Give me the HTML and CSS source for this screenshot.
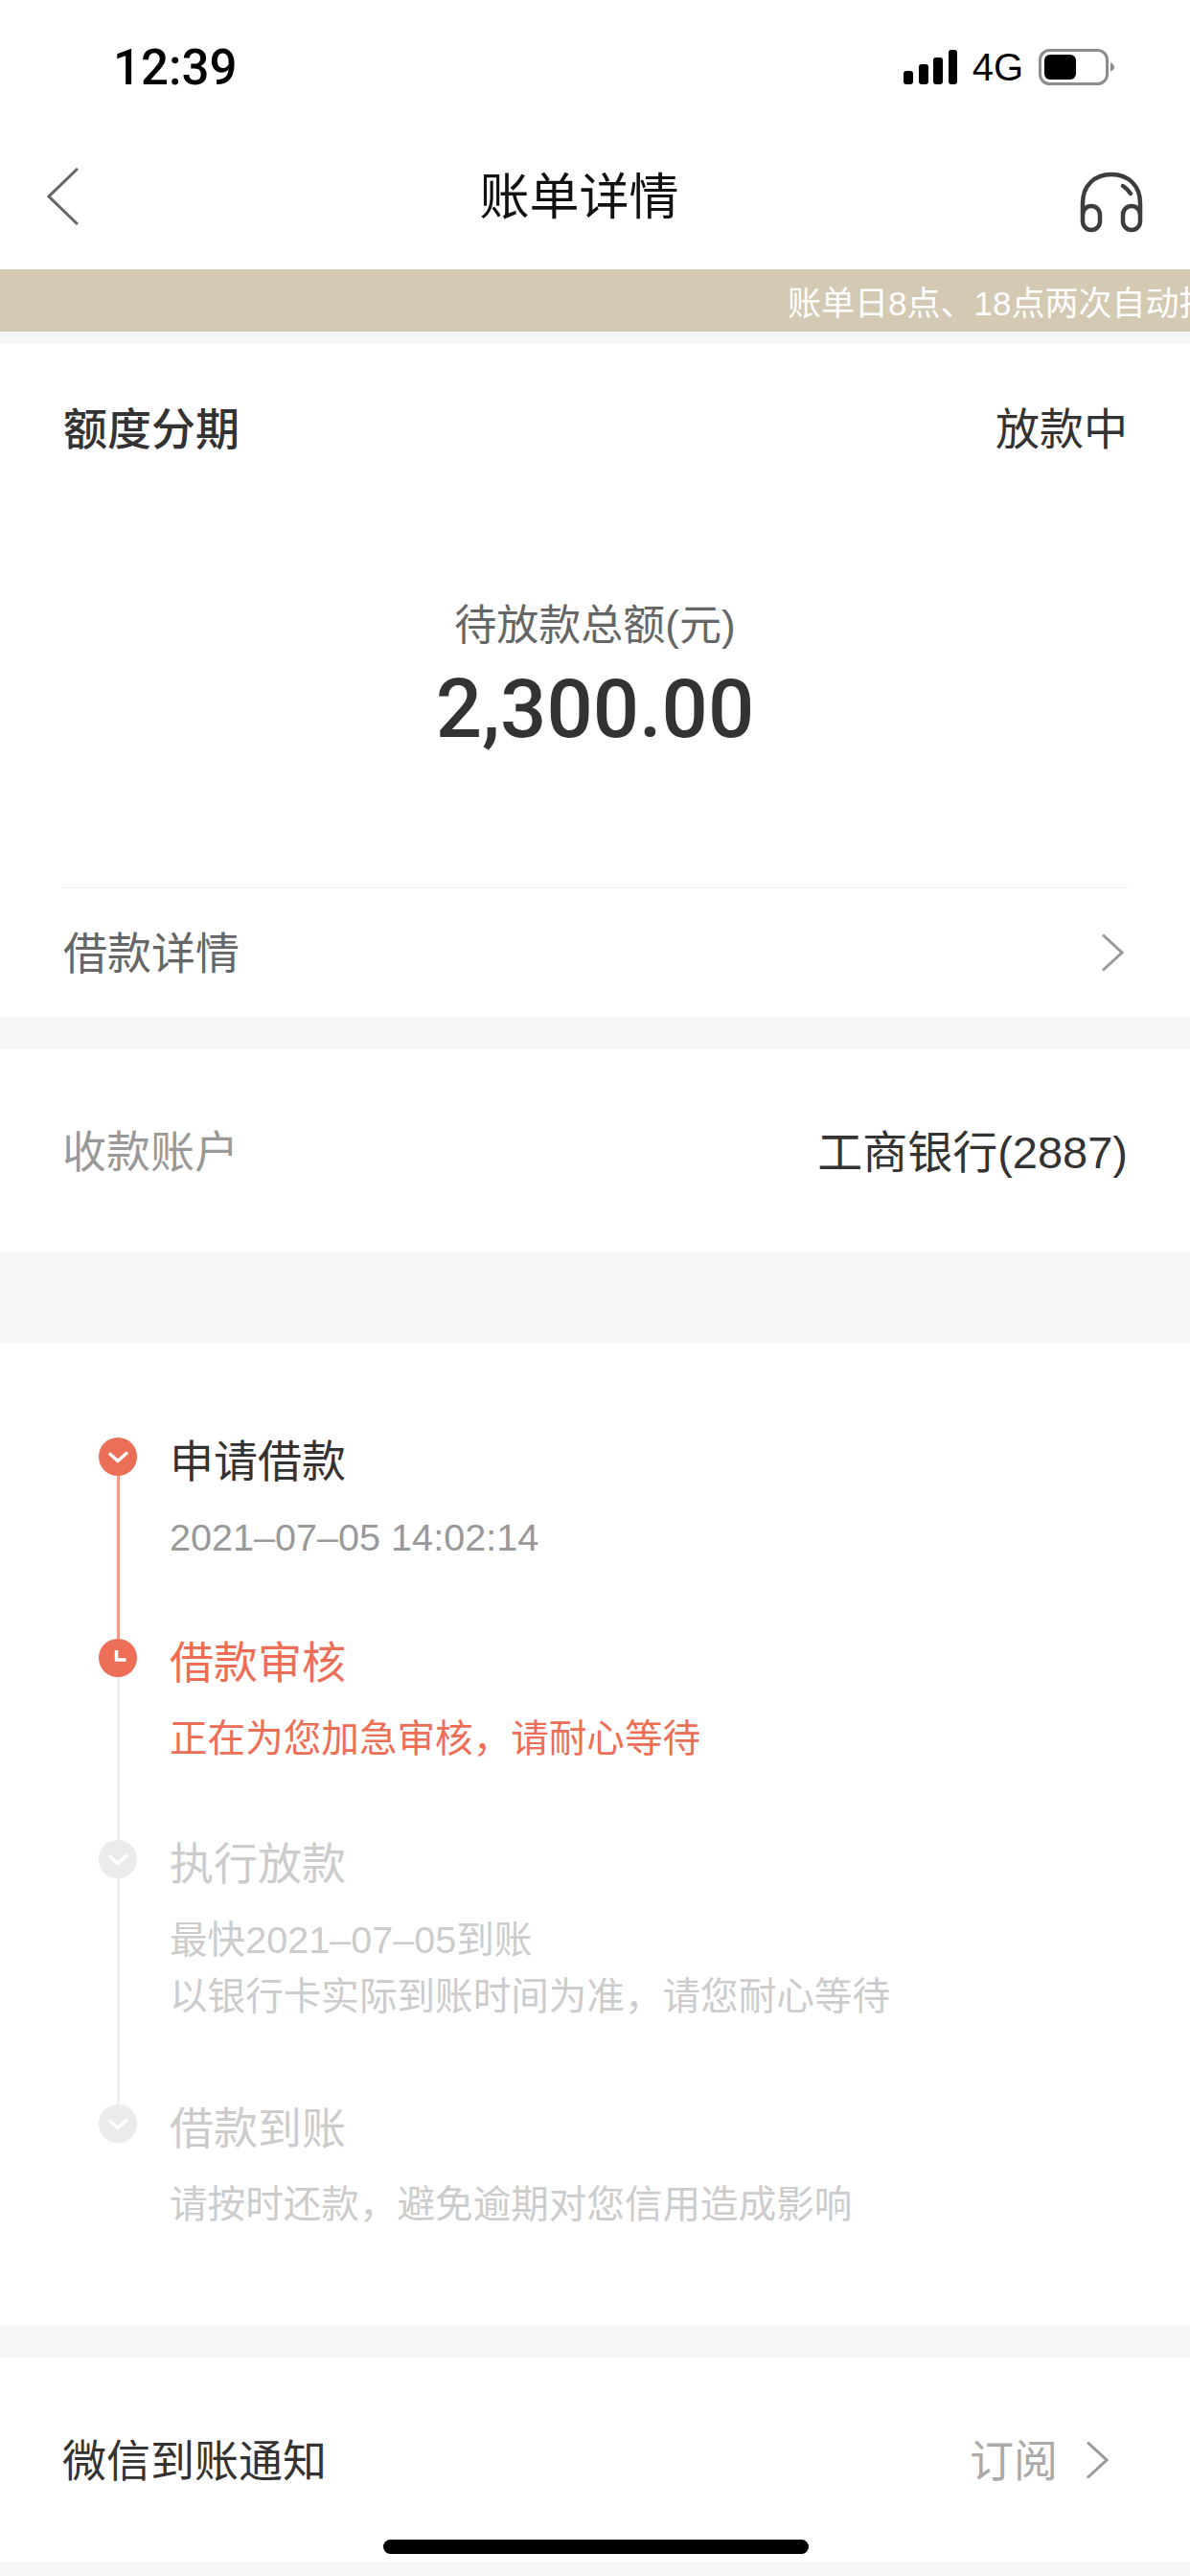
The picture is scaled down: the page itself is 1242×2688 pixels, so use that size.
FILE: index.html
```html
<!DOCTYPE html>
<html lang="zh-CN">
<head>
<meta charset="utf-8">
<title>账单详情</title>
<link rel="stylesheet" href="styles.css">
</head>
<body>
<div class="page">
  <header class="top">
    <div class="status">
      <span class="time">12:39</span>
      <div class="status-icons">
        <svg class="signal" width="56" height="36" viewBox="0 0 56 36"><rect x="0" y="22" width="10" height="14" rx="3"/><rect x="16" y="15" width="10" height="21" rx="3"/><rect x="31" y="8" width="10" height="28" rx="3"/><rect x="47" y="0" width="9" height="36" rx="3"/></svg>
        <span class="net">4G</span>
        <svg class="battery" width="79" height="38" viewBox="0 0 79 38"><rect x="1.500" y="1.500" width="70" height="35" rx="10" fill="none" stroke="#8c8c8c" stroke-width="3"/><rect x="6" y="6" width="33" height="26" rx="6" fill="#000"/><path d="M75 14.500c2.500 1 4 2.500 4 4.500s-1.500 3.500-4 4.500z" fill="#8c8c8c"/></svg>
      </div>
    </div>
    <nav class="nav">
      <svg class="nav-back" width="33" height="60" viewBox="0 0 33 60"><path d="M32 1 2 30l30 29" fill="none" stroke="#666" stroke-width="3"/></svg>
      <h1 class="nav-title">账单详情</h1>
      <svg width="66" height="64" viewBox="0 0 66 64" fill="none" stroke="#3d3d3d" stroke-width="4.500" stroke-linecap="round"><path d="M3 44V33C3 15 15 3 33 3s30 12 30 30v11"/><path d="M45 15c3 2 6 5 8 8"/><rect x="3" y="36" width="18" height="25" rx="9"/><rect x="45" y="36" width="18" height="25" rx="9"/></svg>
    </nav>
  </header>

  <div class="notice"><span class="notice-text">账单日8点、18点两次自动扣</span></div>

  <section class="card card-main">
    <div class="row row-head">
      <span class="product">额度分期</span>
      <span class="state">放款中</span>
    </div>
    <div class="summary">
      <div class="summary-label">待放款总额(元)</div>
      <div class="summary-amount">2,300.00</div>
    </div>
    <div class="row row-link">
      <span class="link-label">借款详情</span>
      <svg class="chev" width="24" height="40" viewBox="0 0 24 40"><path d="M2 1.500 22 20 2 38.500" fill="none" stroke="#999" stroke-width="3"/></svg>
    </div>
  </section>

  <section class="card card-account">
    <div class="row row-account">
      <span class="muted">收款账户</span>
      <span class="value">工商银行(2887)</span>
    </div>
  </section>

  <section class="card card-steps">
    <ol class="steps">
      <li class="step step-done">
        <div class="rail">
          <svg class="dot" width="40" height="40" viewBox="0 0 40 40"><circle cx="20" cy="20" r="20" fill="#ec6e56"/><path d="M11 16.500l9 8 10-9" fill="none" stroke="#fff" stroke-width="3.500"/></svg>
          <span class="line"></span>
        </div>
        <div class="step-body">
          <div class="step-title">申请借款</div>
          <p class="step-note">2021–07–05 14:02:14</p>
        </div>
      </li>
      <li class="step step-active">
        <div class="rail">
          <svg class="dot" width="40" height="40" viewBox="0 0 40 40"><circle cx="20" cy="20" r="20" fill="#ec6e56"/><path d="M18.500 12v10h10" fill="none" stroke="#fff" stroke-width="3.500"/></svg>
          <span class="line"></span>
        </div>
        <div class="step-body">
          <div class="step-title">借款审核</div>
          <p class="step-note">正在为您加急审核，请耐心等待</p>
        </div>
      </li>
      <li class="step step-todo step-tall">
        <div class="rail">
          <svg class="dot" width="40" height="40" viewBox="0 0 40 40"><circle cx="20" cy="20" r="20" fill="#ebebeb"/><path d="M11 16.500l9 8 10-9" fill="none" stroke="#fff" stroke-width="3.500"/></svg>
          <span class="line"></span>
        </div>
        <div class="step-body">
          <div class="step-title">执行放款</div>
          <p class="step-note">最快2021–07–05到账<br>以银行卡实际到账时间为准，请您耐心等待</p>
        </div>
      </li>
      <li class="step step-todo">
        <div class="rail">
          <svg class="dot" width="40" height="40" viewBox="0 0 40 40"><circle cx="20" cy="20" r="20" fill="#ebebeb"/><path d="M11 16.500l9 8 10-9" fill="none" stroke="#fff" stroke-width="3.500"/></svg>
        </div>
        <div class="step-body">
          <div class="step-title">借款到账</div>
          <p class="step-note">请按时还款，避免逾期对您信用造成影响</p>
        </div>
      </li>
    </ol>
  </section>

  <section class="card card-notify">
    <div class="row row-notify">
      <span class="notify-label">微信到账通知</span>
      <span class="notify-action">
        <span class="notify-sub">订阅</span>
        <svg width="24" height="40" viewBox="0 0 24 40"><path d="M2 1.500 22 20 2 38.500" fill="none" stroke="#999" stroke-width="3"/></svg>
      </span>
    </div>
  </section>

  <div class="home-bar"></div>
</div>
</body>
</html>
```

FILE: styles.css
```css
* { box-sizing: border-box; }
html, body { margin: 0; padding: 0; }
body {
  background: #f5f6f8;
  font-family: "Liberation Sans", "Noto Sans CJK SC", sans-serif;
  color: #333;
}
.page {
  position: relative;
  width: 1242px;
  height: 2688px;
  overflow: hidden;
}
.top { background: #fff; height: 281px; }
.status {
  height: 140px;
  padding: 0 79px 0 118px;
  display: flex;
  align-items: center;
  justify-content: space-between;
}
.time {
  font-family: Roboto, "Liberation Sans", sans-serif;
  font-weight: 500;
  font-size: 51px;
  color: #000;
}
.status-icons { display: flex; align-items: center; }
.signal { fill: #000; margin-right: 16px; }
.net {
  font-size: 40px;
  color: #000;
  margin-right: 16px;
}
.nav {
  height: 141px;
  padding: 0 49px;
  display: flex;
  align-items: center;
  justify-content: space-between;
}
.nav-back { margin-bottom: 12px; }
.nav-title {
  margin: 0 0 18px;
  font-size: 52px;
  font-weight: 400;
  color: #111;
}
.notice {
  height: 65px;
  background: #d4c9b3;
  padding-left: 822px;
  display: flex;
  align-items: center;
  overflow: hidden;
  white-space: nowrap;
}
.notice-text { font-size: 35px; color: #fff; flex: none; }
.card { background: #fff; }
.card-main { margin-top: 13px; height: 702px; }
.card-account { margin-top: 34px; height: 212px; }
.card-steps { margin-top: 94px; height: 1026px; padding: 99px 0 0 103px; }
.card-notify { margin-top: 33px; height: 213px; }
.row {
  display: flex;
  align-items: center;
  justify-content: space-between;
  margin: 0 65px;
}
.row-head { height: 178px; padding-bottom: 8px; }
.product { font-weight: 500; color: #333; font-size: 46px; margin-left: 1px; }
.state { color: #333; font-size: 46px; }
.summary { text-align: center; padding-top: 87px; height: 389px; }
.summary-label { font-size: 44px; line-height: 58px; color: #666; }
.summary-amount {
  font-family: Roboto, "Liberation Sans", sans-serif;
  font-weight: 500;
  font-size: 85px;
  line-height: 100px;
  margin-top: 8px;
  color: #333;
}
.row-link {
  height: 135px;
  border-top: 1px solid #eeeeee;
  padding-right: 4px;
}
.link-label { font-size: 46px; color: #666; margin: 0 0 6px 1px; }
.row-account { height: 212px; padding-bottom: 6px; }
.muted { color: #999; font-size: 46px; }
.value { color: #333; font-size: 47px; }
.steps { list-style: none; margin: 0; padding: 0; }
.step { display: flex; height: 210px; }
.step-tall { height: 276px; }
.rail {
  width: 40px;
  margin-right: 34px;
  display: flex;
  flex-direction: column;
  align-items: center;
}
.dot { display: block; flex: none; }
.line { flex: 1; width: 3px; background: #eee; }
.step-done .line { background: #f29c8c; }
.step-title { font-size: 46px; line-height: 40px; padding-top: 5px; color: #333; }
.step-note {
  margin: 30px 0 0;
  font-size: 39.6px;
  line-height: 59px;
  color: #999;
}
.step-active .step-title, .step-active .step-note { color: #ec6e56; }
.step-todo .step-title, .step-todo .step-note { color: #ccc; }
.row-notify { height: 213px; margin-right: 85px; }
.notify-label { font-size: 46px; color: #333; margin-bottom: 6px; }
.notify-action { display: flex; align-items: center; }
.notify-sub { font-size: 46px; color: #aaa; margin: 0 29px 6px 0; }
.home-bar {
  position: absolute;
  left: 400px;
  top: 2650px;
  width: 444px;
  height: 15px;
  border-radius: 8px;
  background: #000;
}
```
